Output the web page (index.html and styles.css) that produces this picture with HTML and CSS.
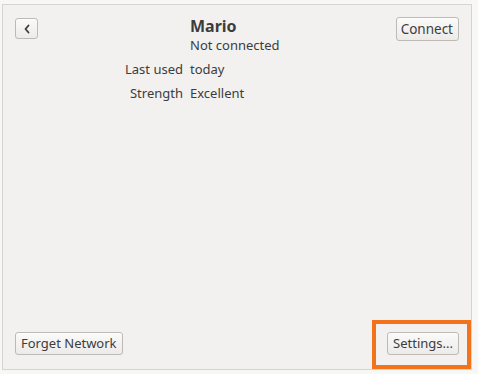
FILE: index.html
```html
<!DOCTYPE html>
<html>
<head>
<meta charset="utf-8">
<link rel="stylesheet" href="styles.css">
</head>
<body>
<div class="panel">
  <div class="top">
    <button class="btn back" aria-label="Back">
      <svg width="8" height="10" viewBox="0 0 8 10"><path d="M5.5 1.5 L2.5 5 L5.5 8.5" fill="none" stroke="#3c3c3c" stroke-width="1.8" stroke-linecap="round" stroke-linejoin="round"/></svg>
    </button>
    <div class="name">Mario</div>
    <button class="btn connect">Connect</button>
    <div class="status">Not connected</div>
    <div class="label l1">Last used</div>
    <div class="value v1">today</div>
    <div class="label l2">Strength</div>
    <div class="value v2">Excellent</div>
  </div>
  <div class="bottom">
    <button class="btn">Forget Network</button>
    <button class="btn">Settings...</button>
  </div>
  <div class="highlight"></div>
</div>
</body>
</html>
```

FILE: styles.css
```css
* { box-sizing: border-box; }
html, body { margin: 0; padding: 0; }
body {
  width: 478px;
  height: 374px;
  background: #f7f7f6;
  font-family: "Noto Sans", "DejaVu Sans", sans-serif;
  font-size: 13px;
  color: #3c3c3c;
  padding: 4px 0 0 2px;
}
.panel {
  position: relative;
  width: 470px;
  height: 366px;
  border: 1px solid #d6d4d1;
  background: #f2f1f0;
  display: flex;
  flex-direction: column;
  justify-content: space-between;
  padding: 12px 12px 14px 12px;
}
.top {
  display: grid;
  grid-template-columns: 168px 1fr auto;
  grid-template-rows: 19px 18px 25px 24px;
  column-gap: 7px;
}
.btn {
  font-family: inherit;
  font-size: 13px;
  color: #3c3c3c;
  background: linear-gradient(#fafaf9, #ecebea);
  border: 1px solid #bdbab5;
  border-radius: 3px;
  box-shadow: 0 1px 0 rgba(255,255,255,0.7) inset;
  padding: 0 5px;
  height: 23px;
  line-height: 21px;
  margin: 0;
}
.back {
  grid-column: 1;
  grid-row: 1 / span 2;
  justify-self: start;
  align-self: start;
  width: 23px;
  height: 21px;
  margin-top: 1px;
  padding: 0;
  display: flex;
  align-items: center;
  justify-content: center;
}
.connect {
  grid-column: 3;
  grid-row: 1 / span 2;
  align-self: start;
  height: 24px;
  padding: 0 5px 0 4px;
  font-size: 13.5px;
}
.name {
  grid-column: 2;
  grid-row: 1;
  font-weight: bold;
  font-size: 16px;
  line-height: 19px;
}
.status {
  grid-column: 2;
  grid-row: 2;
  line-height: 18px;
}
.label {
  grid-column: 1;
  text-align: right;
  align-self: end;
  line-height: 20px;
}
.value {
  grid-column: 2;
  align-self: end;
  line-height: 20px;
}
.l1, .v1 { grid-row: 3; }
.l2, .v2 { grid-row: 4; }
.bottom {
  display: flex;
  justify-content: space-between;
  align-items: center;
}
.bottom .btn { height: 23px; }
.highlight {
  position: absolute;
  left: 369px;
  top: 315px;
  width: 99px;
  height: 49px;
  border: 4px solid #f3731d;
}
```
